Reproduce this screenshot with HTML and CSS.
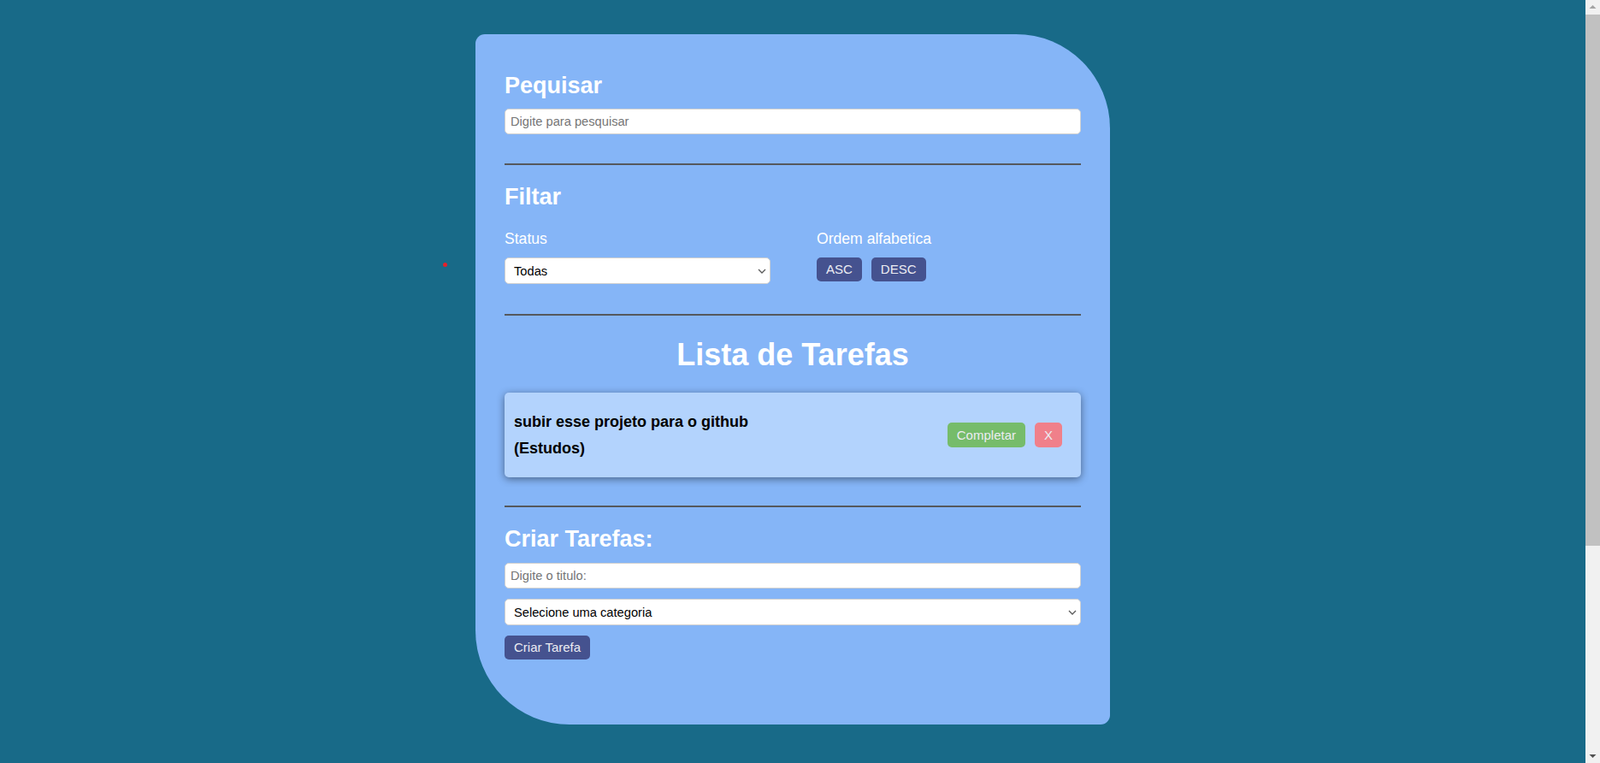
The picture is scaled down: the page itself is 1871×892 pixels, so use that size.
FILE: index.html
```html
<!DOCTYPE html>
<html lang="pt-BR">
<head>
<meta charset="utf-8">
<title>Lista de Tarefas</title>
<link rel="stylesheet" href="styles.css">
</head>
<body>
<div class="page">
  <span class="dot"></span>
  <main class="card">
    <section class="search">
      <h2 class="section-title">Pequisar</h2>
      <input class="text-input" type="text" placeholder="Digite para pesquisar">
    </section>
    <div class="divider divider-search"></div>
    <section class="filter">
      <h2 class="section-title filter-title">Filtar</h2>
      <div class="filter-row">
        <div class="filter-col status-col">
          <p class="label">Status</p>
          <div class="select-wrap status-wrap">
            <select class="select">
              <option>Todas</option>
            </select>
            <svg class="chevron" width="10" height="6" viewBox="0 0 10 6"><path d="M1 1l4 4 4-4" fill="none" stroke="#5a5a5a" stroke-width="1.3"/></svg>
          </div>
        </div>
        <div class="filter-col">
          <p class="label">Ordem alfabetica</p>
          <div class="btn-row">
            <button class="btn">ASC</button>
            <button class="btn">DESC</button>
          </div>
        </div>
      </div>
    </section>
    <div class="divider divider-filter"></div>
    <h1 class="list-title">Lista de Tarefas</h1>
    <div class="todo">
      <div class="todo-text">
        <p class="todo-title">subir esse projeto para o github</p>
        <p class="todo-category">(Estudos)</p>
      </div>
      <div class="todo-actions">
        <button class="btn btn-complete">Completar</button>
        <button class="btn btn-remove">X</button>
      </div>
    </div>
    <div class="divider divider-list"></div>
    <section class="create">
      <h2 class="section-title create-title">Criar Tarefas:</h2>
      <input class="text-input" type="text" placeholder="Digite o titulo:">
      <div class="select-wrap create-wrap">
        <select class="select">
          <option>Selecione uma categoria</option>
        </select>
        <svg class="chevron" width="10" height="6" viewBox="0 0 10 6"><path d="M1 1l4 4 4-4" fill="none" stroke="#5a5a5a" stroke-width="1.3"/></svg>
      </div>
      <button class="btn btn-create">Criar Tarefa</button>
    </section>
  </main>
</div>
<aside class="scrollbar" aria-hidden="true">
  <svg class="sb-arrow sb-up" width="17" height="17" viewBox="0 0 17 17"><path d="M4.5 10l4-4 4 4z" fill="#a3a3a3"/></svg>
  <div class="sb-thumb"></div>
  <svg class="sb-arrow sb-down" width="17" height="17" viewBox="0 0 17 17"><path d="M4.5 7l4 4 4-4z" fill="#505050"/></svg>
</aside>
</body>
</html>
```

FILE: styles.css
```css
* {
  box-sizing: border-box;
}

html, body {
  margin: 0;
  padding: 0;
}

body {
  background: #186a88;
  font-family: "Liberation Sans", Arial, sans-serif;
  color: #fff;
}

.page {
  position: relative;
  padding: 40px 17px 44px 0;
}

.dot {
  position: absolute;
  left: 518px;
  top: 307px;
  width: 5px;
  height: 5px;
  border-radius: 50%;
  background: #e5202a;
}

.card {
  width: 742px;
  margin: 0 auto;
  padding: 45px 34px 76px;
  background: #85b5f7;
  border-radius: 11px 110px 11px 110px;
}

.section-title {
  margin: 0 0 12px;
  font-size: 27px;
  line-height: 30px;
  font-weight: bold;
  color: #fff;
}

.filter-title {
  margin-bottom: 24px;
}

.create-title {
  margin-bottom: 13px;
}

.divider {
  height: 2px;
  background: #55585d;
}

.divider-search {
  margin: 34px 0 22px;
}

.divider-filter {
  margin: 35px 0 0;
}

.divider-list {
  margin: 33px 0 22px;
}

.text-input {
  display: block;
  width: 100%;
  height: 30px;
  padding: 0 6px;
  border: 1px solid #d0d0d0;
  border-radius: 5px;
  background: #fff;
  font-family: "Liberation Sans", Arial, sans-serif;
  font-size: 14.67px;
  color: #000;
}

.text-input::placeholder {
  color: #757575;
}

.filter-row {
  display: flex;
}

.status-col {
  width: 365px;
}

.label {
  margin: 0 0 12px;
  font-size: 17.6px;
  line-height: 20px;
  color: #fff;
}

.select-wrap {
  position: relative;
  height: 31px;
}

.status-wrap {
  width: 311px;
}

.create-wrap {
  width: 100%;
  margin-top: 12px;
}

.select {
  display: block;
  width: 100%;
  height: 31px;
  padding: 0 24px 0 10px;
  border: 1px solid #d0d0d0;
  border-radius: 5px;
  background: #fff;
  font-family: "Liberation Sans", Arial, sans-serif;
  font-size: 14.67px;
  color: #000;
  appearance: none;
  -webkit-appearance: none;
}

.chevron {
  position: absolute;
  right: 5px;
  top: 13px;
  pointer-events: none;
}

.btn-row {
  display: flex;
  gap: 11px;
}

.btn {
  height: 28px;
  padding: 0 11px;
  border: none;
  border-radius: 5px;
  background: #45528f;
  color: #ececf2;
  font-family: "Liberation Sans", Arial, sans-serif;
  font-size: 15px;
  line-height: 28px;
}

.list-title {
  margin: 26px 0 24px;
  text-align: center;
  font-size: 36px;
  line-height: 40px;
  font-weight: bold;
  color: #fff;
}

.todo {
  display: flex;
  align-items: center;
  justify-content: space-between;
  height: 99px;
  padding: 0 22px 0 11px;
  background: #b3d3fd;
  border-radius: 5px;
  box-shadow: 0 2px 10px rgba(0, 0, 0, 0.45);
}

.todo-text p {
  margin: 0;
  font-size: 18px;
  line-height: 21px;
  font-weight: bold;
  color: #000;
}

.todo-text .todo-title {
  margin-bottom: 10px;
}

.todo-actions {
  display: flex;
  gap: 11px;
}

.btn-complete {
  height: 29px;
  padding: 0 11px;
  background: #76bc6a;
}

.btn-remove {
  height: 29px;
  background: #f0808a;
}

.btn-create {
  display: block;
  margin-top: 12px;
}

.scrollbar {
  position: fixed;
  top: 0;
  right: 0;
  width: 17px;
  height: 100%;
  background: #f1f1f1;
}

.sb-arrow {
  position: absolute;
  left: 0;
}

.sb-up {
  top: 0;
}

.sb-down {
  bottom: 0;
}

.sb-thumb {
  position: absolute;
  left: 0;
  top: 17px;
  width: 17px;
  height: 621px;
  background: #c1c1c1;
}
```
